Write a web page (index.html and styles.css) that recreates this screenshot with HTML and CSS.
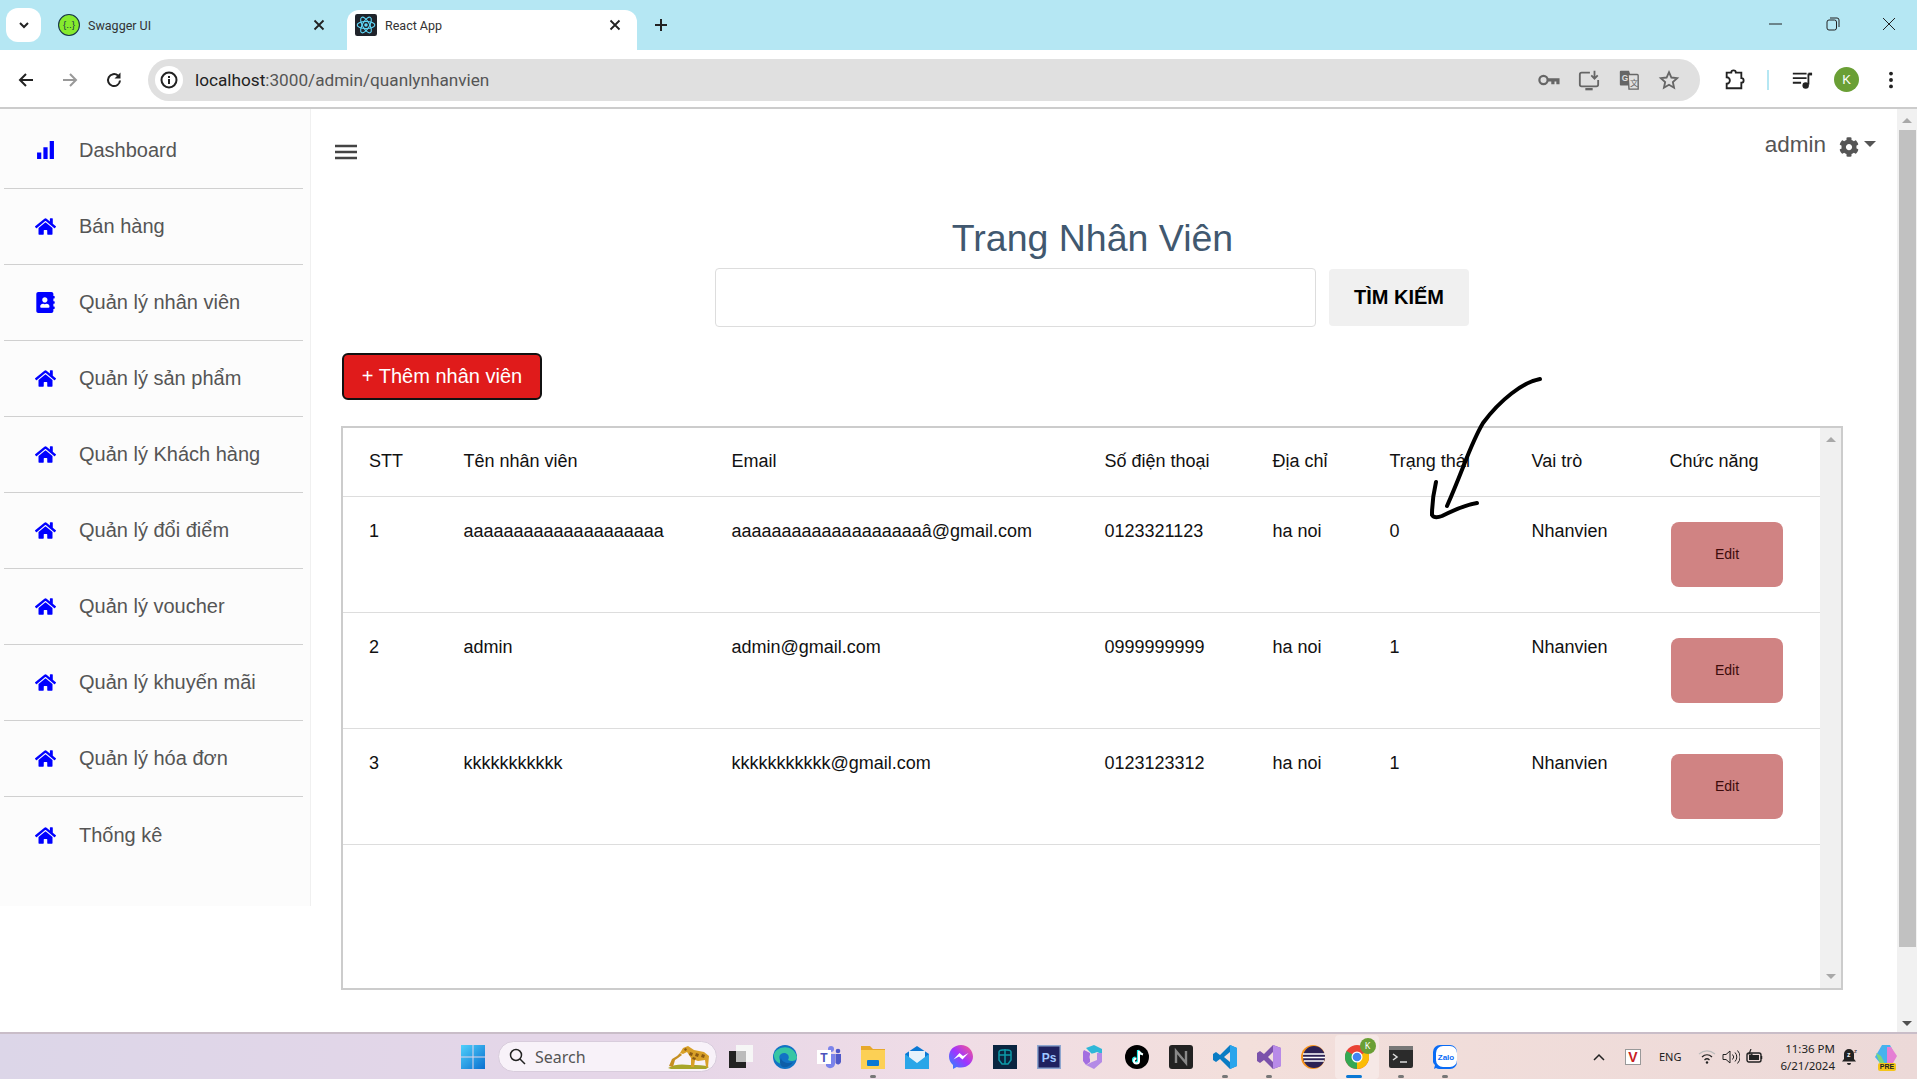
FILE: index.html
```html
<!DOCTYPE html>
<html lang="vi">
<head>
    <meta charset="UTF-8">
    <title>React App</title>
    <link rel="stylesheet" href="styles.css">
</head>
<body>
    <svg class="defs">
        <symbol id="i-home" viewBox="0 0 576 512"><path d="M280.37 148.26L96 300.11V464a16 16 0 0 0 16 16l112.06-.29a16 16 0 0 0 15.92-16V368a16 16 0 0 1 16-16h64a16 16 0 0 1 16 16v95.64a16 16 0 0 0 16 16.05L464 480a16 16 0 0 0 16-16V300L295.67 148.26a12.19 12.19 0 0 0-15.3 0zM571.6 251.47L488 182.56V44.05a12 12 0 0 0-12-12h-56a12 12 0 0 0-12 12v72.61L318.47 43a48 48 0 0 0-61 0L4.34 251.47a12 12 0 0 0-1.6 16.9l25.5 31A12 12 0 0 0 45.15 301l235.22-193.74a12.19 12.19 0 0 1 15.3 0L530.9 301a12 12 0 0 0 16.9-1.6l25.5-31a12 12 0 0 0-1.7-16.93z"/></symbol>
        <symbol id="i-book" viewBox="0 0 448 512"><path d="M436 160c6.6 0 12-5.4 12-12v-40c0-6.6-5.4-12-12-12h-20V48c0-26.5-21.5-48-48-48H48C21.5 0 0 21.5 0 48v416c0 26.5 21.5 48 48 48h320c26.5 0 48-21.5 48-48v-48h20c6.6 0 12-5.4 12-12v-40c0-6.6-5.4-12-12-12h-20v-64h20c6.6 0 12-5.4 12-12v-40c0-6.6-5.4-12-12-12h-20v-64h20zm-228-32c35.3 0 64 28.7 64 64s-28.7 64-64 64-64-28.7-64-64 28.7-64 64-64zm112 236c0 10.6-10 19.2-22.4 19.2H118.4C106 384 96 375.4 96 364.8v-19.2c0-31.8 30.1-57.6 67.2-57.6h5c12.3 5.1 25.7 8 39.8 8s27.6-2.9 39.8-8h5c37.1 0 67.2 25.8 67.2 57.6v19.2z"/></symbol>
        <symbol id="i-bars" viewBox="0 0 18 18"><path d="M1 11h4v6H1zM7 6h4v11H7zM13 0h4v17h-4z"/></symbol>
        <symbol id="i-cog" viewBox="0 0 512 512"><path d="M487.4 315.7l-42.6-24.6c4.3-23.2 4.3-47 0-70.2l42.6-24.6c4.9-2.8 7.1-8.6 5.5-14-11.1-35.6-30-67.8-54.7-94.6-3.8-4.1-10-5.1-14.8-2.3L380.8 110c-17.9-15.4-38.5-27.3-60.8-35.1V25.8c0-5.6-3.9-10.5-9.4-11.7-36.7-8.2-74.3-7.8-109.2 0-5.5 1.2-9.4 6.1-9.4 11.7V75c-22.2 7.9-42.8 19.8-60.8 35.1L88.7 85.5c-4.9-2.8-11-1.9-14.8 2.3-24.7 26.7-43.6 58.9-54.7 94.6-1.7 5.4.6 11.2 5.5 14L67.3 221c-4.3 23.2-4.3 47 0 70.2l-42.6 24.6c-4.9 2.8-7.1 8.6-5.5 14 11.1 35.6 30 67.8 54.7 94.6 3.8 4.1 10 5.1 14.8 2.3l42.6-24.6c17.9 15.4 38.5 27.3 60.8 35.1v49.2c0 5.6 3.9 10.5 9.4 11.7 36.7 8.2 74.3 7.8 109.2 0 5.5-1.2 9.4-6.1 9.4-11.7v-49.2c22.2-7.9 42.8-19.8 60.8-35.1l42.6 24.6c4.9 2.8 11 1.9 14.8-2.3 24.7-26.7 43.6-58.9 54.7-94.6 1.5-5.5-.7-11.3-5.6-14.1zM256 336c-44.1 0-80-35.9-80-80s35.9-80 80-80 80 35.9 80 80-35.9 80-80 80z"/></symbol>
        <symbol id="i-x" viewBox="0 0 12 12"><path d="M1.500 1.500l9 9M10.500 1.500l-9 9" stroke="#222" stroke-width="1.800"/></symbol>
    </svg>

    <!-- browser tabs -->
    <div class="tabstrip">
        <div class="tab-search"><svg width="12" height="12" viewBox="0 0 12 12"><path d="M2 4l4 4 4-4" fill="none" stroke="#222" stroke-width="2"/></svg></div>
        <div class="tab">
            <svg class="favicon" viewBox="0 0 20 20"><circle cx="10" cy="10" r="9.500" fill="#85ea2d" stroke="#173647" stroke-width="1"/><text x="10" y="13" font-size="9" text-anchor="middle" fill="#173647" font-family="Liberation Sans">{..}</text></svg>
            <span class="tab-title">Swagger UI</span>
            <svg class="tab-close"><use href="#i-x"/></svg>
        </div>
        <div class="tab tab-active">
            <svg class="favicon" viewBox="0 0 20 20"><rect width="20" height="20" rx="2" fill="#20232a"/><g fill="none" stroke="#61dafb" stroke-width="1"><ellipse cx="10" cy="10" rx="8" ry="3.200"/><ellipse cx="10" cy="10" rx="8" ry="3.200" transform="rotate(60 10 10)"/><ellipse cx="10" cy="10" rx="8" ry="3.200" transform="rotate(120 10 10)"/></g><circle cx="10" cy="10" r="1.600" fill="#61dafb"/></svg>
            <span class="tab-title">React App</span>
            <svg class="tab-close"><use href="#i-x"/></svg>
        </div>
        <svg class="tab-new" width="16" height="16" viewBox="0 0 16 16"><path d="M8 2v12M2 8h12" stroke="#222" stroke-width="2"/></svg>
        <div class="window-btns">
            <svg width="14" height="14" viewBox="0 0 14 14"><path d="M0 7h13" stroke="#222"/></svg>
            <svg width="14" height="14" viewBox="0 0 14 14"><rect x="1" y="3" width="9.500" height="10" rx="2" fill="none" stroke="#222"/><path d="M4 1h7a2 2 0 0 1 2 2v7" fill="none" stroke="#222"/></svg>
            <svg width="14" height="14" viewBox="0 0 14 14"><path d="M1 1l12 12M13 1L1 13" stroke="#222"/></svg>
        </div>
    </div>

    <!-- address bar -->
    <div class="toolbar">
        <svg class="nav-btn" viewBox="0 0 18 18"><path d="M16 9H3M9 3L3 9l6 6" fill="none" stroke="#222" stroke-width="2"/></svg>
        <svg class="nav-btn" viewBox="0 0 18 18"><path d="M2 9h13M9 3l6 6-6 6" fill="none" stroke="#999" stroke-width="2"/></svg>
        <svg class="nav-btn" viewBox="0 0 18 18"><path d="M15 9.500A6 6 0 1 1 13 4.600" fill="none" stroke="#222" stroke-width="2"/><path d="M15.500 1.500v6h-6z" fill="#222"/></svg>
        <div class="urlbar">
            <span class="url-info"><svg width="18" height="18" viewBox="0 0 18 18"><circle cx="9" cy="9" r="7.500" fill="none" stroke="#222" stroke-width="2"/><path d="M9 8v5M9 5v2" stroke="#222" stroke-width="2"/></svg></span>
            <span class="url-text"><b>localhost</b>:3000/admin/quanlynhanvien</span>
            <div class="url-icons">
                <svg viewBox="0 0 24 24"><circle cx="6" cy="12" r="4.500" fill="none" stroke="#666" stroke-width="2.400"/><path d="M10.500 10h13v6.500h-3.500v-3h-2v3h-3.500v-3h-4z" fill="#666"/></svg>
                <svg viewBox="0 0 24 24"><path d="M13 4H4a2 2 0 0 0-2 2v11a2 2 0 0 0 2 2h16a2 2 0 0 0 2-2v-5" fill="none" stroke="#666" stroke-width="2"/><path d="M8 22h8" stroke="#666" stroke-width="2.500"/><path d="M18 2v8M14.500 7l3.500 3.500 3.500-3.500" fill="none" stroke="#666" stroke-width="2"/></svg>
                <svg viewBox="0 0 24 24"><path d="M3 2h9l1 3v13H3a1 1 0 0 1-1-1V3a1 1 0 0 1 1-1z" fill="#666"/><path d="M11 6h10a1 1 0 0 1 1 1v15H12z" fill="#e0e0e0" stroke="#666" stroke-width="1.500"/><text x="4" y="13" font-size="9" font-weight="bold" fill="#e0e0e0" font-family="Liberation Sans">G</text><text x="13" y="18" font-size="9" fill="#666" font-family="Noto Sans CJK SC">文</text></svg>
                <svg viewBox="0 0 24 24"><path d="M12 3.500l2.600 5.800 6.300.7-4.700 4.200 1.300 6.200-5.500-3.200-5.500 3.200 1.300-6.200L3.100 10l6.300-.7z" fill="none" stroke="#666" stroke-width="2"/></svg>
            </div>
        </div>
        <svg class="tool-btn ext" viewBox="0 0 24 24"><path d="M4 4h5a2.500 2.500 0 0 1 5 0h6v6a2.500 2.500 0 0 1 0 5v6H4v-5a2.500 2.500 0 0 0 0-7z" fill="none" stroke="#222" stroke-width="2"/></svg>
        <span class="tool-sep"></span>
        <svg class="tool-btn media" viewBox="0 0 24 24"><path d="M2 5h15M2 10h15M2 15h9" stroke="#222" stroke-width="2"/><path d="M19 5v12" stroke="#222" stroke-width="2"/><path d="M19 4h4v3h-4z" fill="#222"/><circle cx="16" cy="18" r="3.500" fill="#222"/></svg>
        <span class="avatar">K</span>
        <svg class="tool-btn dots" viewBox="0 0 24 24"><circle cx="12" cy="5" r="2.100" fill="#222"/><circle cx="12" cy="12" r="2.100" fill="#222"/><circle cx="12" cy="19" r="2.100" fill="#222"/></svg>
    </div>

    <!-- page -->
    <div class="viewport">
        <div class="page">
            <aside class="sidebar">
                <a class="side-item"><svg class="side-icon"><use href="#i-bars"/></svg>Dashboard</a>
                <a class="side-item"><svg class="side-icon"><use href="#i-home"/></svg>Bán hàng</a>
                <a class="side-item"><svg class="side-icon side-book"><use href="#i-book"/></svg>Quản lý nhân viên</a>
                <a class="side-item"><svg class="side-icon"><use href="#i-home"/></svg>Quản lý sản phẩm</a>
                <a class="side-item"><svg class="side-icon"><use href="#i-home"/></svg>Quản lý Khách hàng</a>
                <a class="side-item"><svg class="side-icon"><use href="#i-home"/></svg>Quản lý đổi điểm</a>
                <a class="side-item"><svg class="side-icon"><use href="#i-home"/></svg>Quản lý voucher</a>
                <a class="side-item"><svg class="side-icon"><use href="#i-home"/></svg>Quản lý khuyến mãi</a>
                <a class="side-item"><svg class="side-icon"><use href="#i-home"/></svg>Quản lý hóa đơn</a>
                <a class="side-item"><svg class="side-icon"><use href="#i-home"/></svg>Thống kê</a>
            </aside>

            <main class="content">
                <div class="topbar">
                    <svg class="burger" viewBox="0 0 22 16"><path d="M0 2h22M0 8h22M0 14h22" stroke="#444" stroke-width="2.400"/></svg>
                    <div class="user-menu">
                        <span>admin</span>
                        <svg class="cog"><use href="#i-cog"/></svg>
                        <span class="caret"></span>
                    </div>
                </div>

                <h1 class="page-title">Trang Nhân Viên</h1>
                <div class="search-row">
                    <input class="search-input" type="text">
                    <button class="search-btn">TÌM KIẾM</button>
                </div>

                <button class="add-btn">+ Thêm nhân viên</button>

                <div class="table-box">
                    <table class="staff-table">
                        <colgroup>
                            <col class="c-stt"><col class="c-name"><col class="c-email"><col class="c-phone"><col class="c-addr"><col class="c-status"><col class="c-role"><col>
                        </colgroup>
                        <thead>
                            <tr>
                                <th>STT</th><th>Tên nhân viên</th><th>Email</th><th>Số điện thoại</th><th>Địa chỉ</th><th>Trạng thái</th><th>Vai trò</th><th>Chức năng</th>
                            </tr>
                        </thead>
                        <tbody>
                            <tr>
                                <td>1</td><td>aaaaaaaaaaaaaaaaaaaa</td><td>aaaaaaaaaaaaaaaaaaaâ@gmail.com</td><td>0123321123</td><td>ha noi</td><td>0</td><td>Nhanvien</td>
                                <td><button class="edit-btn">Edit</button></td>
                            </tr>
                            <tr>
                                <td>2</td><td>admin</td><td>admin@gmail.com</td><td>0999999999</td><td>ha noi</td><td>1</td><td>Nhanvien</td>
                                <td><button class="edit-btn">Edit</button></td>
                            </tr>
                            <tr>
                                <td>3</td><td>kkkkkkkkkkk</td><td>kkkkkkkkkkk@gmail.com</td><td>0123123312</td><td>ha noi</td><td>1</td><td>Nhanvien</td>
                                <td><button class="edit-btn">Edit</button></td>
                            </tr>
                        </tbody>
                    </table>
                    <div class="inner-scroll">
                        <span class="arrow-up"></span>
                        <span class="arrow-down"></span>
                    </div>
                </div>
            </main>
        </div>
        <div class="page-scroll">
            <span class="arrow-up"></span>
            <span class="scroll-thumb"></span>
            <span class="arrow-down dark"></span>
        </div>

        <!-- hand drawn arrow on top of the screenshot -->
        <svg class="scribble" viewBox="1425 375 120 145">
            <path d="M1540 379C1523 382 1500 400 1483 423C1470 445 1465 465 1447 506" fill="none" stroke="#000" stroke-width="4" stroke-linecap="round"/>
            <path d="M1436 482C1433 495 1432 505 1432 515C1434 518 1437 518 1442 516C1452 511 1465 505 1477 503" fill="none" stroke="#000" stroke-width="4" stroke-linecap="round"/>
        </svg>
    </div>

    <!-- windows taskbar -->
    <footer class="taskbar">
        <div class="task-left">
            <svg class="task-icon" viewBox="0 0 24 24"><defs><linearGradient id="win" x1="0" y1="0" x2="1" y2="1"><stop offset="0" stop-color="#4fd0fb"/><stop offset="1" stop-color="#0a6fd0"/></linearGradient></defs><path d="M0 0h11.500v11.500H0zM12.500 0H24v11.500H12.500zM0 12.500h11.500V24H0zM12.500 12.500H24V24H12.500z" fill="url(#win)"/></svg>
            <div class="task-search">
                <svg width="17" height="17" viewBox="0 0 17 17"><circle cx="7" cy="7" r="5.500" fill="none" stroke="#222" stroke-width="1.500"/><path d="M11 11l5 5" stroke="#222" stroke-width="1.500"/></svg>
                <span>Search</span>
                <svg class="giraffe" viewBox="0 0 42 24"><path d="M0 23C6 19 14 19 22 20C30 20 36 20 41 22L38 24H3z" fill="#a8a52a"/><path d="M1 21L4 14L9 11L12 8L14 10L10 13L7 15L5 22z" fill="#c58f22"/><path d="M12 8L15 3L20 1L26 5L36 7L41 11L40 22H38L37 15L30 16L27 15L26 22H23L23 13L19 7L15 9z" fill="#d8a028"/><path d="M22 7l3 1-1 3-3-1zM28 8l3 1-1 3-3-1zM34 9l3 1-1 3-3-1zM25 12l3 1-1 2-3-1zM17 3l2 1-1 2-2-1z" fill="#8a5a14"/></svg>
            </div>
            <svg class="task-icon" viewBox="0 0 24 24"><rect x="7" y="0" width="17" height="17" fill="#f6f6f6"/><rect y="6" width="17" height="17" fill="#222"/><rect x="7" y="6" width="10" height="11" fill="#bbb"/></svg>
            <svg class="task-icon" viewBox="0 0 24 24"><circle cx="12" cy="12" r="12" fill="#1173c5"/><path d="M1 9C4 1 20-2 24 12C24 16 18 17 15 15C18 10 12 6 8 9C5 11 6 17 11 19C6 20 0 15 1 9z" fill="#37c6a4"/><path d="M8 13c1 5 8 6 12 4-2 4-7 6-10 5C7 21 6 16 8 13z" fill="#0d5ea8"/></svg>
            <svg class="task-icon" viewBox="0 0 24 24"><circle cx="14" cy="4" r="3" fill="#7b83eb"/><circle cx="21" cy="6" r="2.300" fill="#5059c9"/><path d="M9 9h9v10a5 5 0 0 1-9 2z" fill="#7b83eb"/><path d="M18.500 9H24v8a3 3 0 0 1-5.500 1z" fill="#5059c9"/><rect y="5" width="14" height="14" fill="#fff"/><text x="7" y="16.500" font-size="12" font-weight="bold" text-anchor="middle" fill="#4b53bc" font-family="Liberation Sans">T</text></svg>
            <span class="task-slot open"><svg class="task-icon" viewBox="0 0 24 24"><path d="M0 1h9l3 3h12v20H0z" fill="#e8a92b"/><path d="M0 5h24v19H0z" fill="#fcd055"/><rect x="6" y="15" width="12" height="6" rx="1" fill="#0a78d4"/></svg></span>
            <svg class="task-icon" viewBox="0 0 24 24"><path d="M0 9L12 1l12 8v15H0z" fill="#0a78d4"/><path d="M4 6h16v9l-8 5-8-5z" fill="#e4f2fb"/><path d="M0 9l12 9 12-9v15H0z" fill="#2aa6e8"/></svg>
            <svg class="task-icon" viewBox="0 0 24 24"><defs><linearGradient id="msg" x1="0" y1="1" x2="1" y2="0"><stop offset="0" stop-color="#1f8fff"/><stop offset=".5" stop-color="#a033ff"/><stop offset="1" stop-color="#ff5c87"/></linearGradient></defs><path d="M12 0C5 0 0 5 0 11.500c0 3.500 1.500 6.500 4 8.500v4l3.700-2c1.400.4 2.800.6 4.300.6 7 0 12-5 12-11S19 0 12 0z" fill="url(#msg)"/><path d="M4.500 14.500l6-6.500 3.500 3 5.500-3-6 6.500-3.500-3z" fill="#fff"/></svg>
            <svg class="task-icon" viewBox="0 0 24 24"><rect width="24" height="24" fill="#0a2540"/><path d="M6 7c0-3 12-3 12 0v8l-3 4h-6l-3-4zM12 4v15M6 10h12" fill="none" stroke="#0d9aa8" stroke-width="1.500"/></svg>
            <svg class="task-icon" viewBox="0 0 24 24"><rect width="24" height="24" fill="#8fa6cf"/><rect x="1.500" y="1.500" width="21" height="21" fill="#1f2260"/><text x="12" y="17" font-size="12" font-weight="bold" text-anchor="middle" fill="#9fc7ff" font-family="Liberation Sans">Ps</text></svg>
            <svg class="task-icon" viewBox="0 0 24 24"><path d="M5 3l8-3 8 4v5l-5-2-5 2z" fill="#2fb7d8"/><path d="M3 5l6 3v9l-4 3-3-4V7z" fill="#a36ee0"/><path d="M21 8v9l-8 7-8-4 6-3 5-2V8z" fill="#b48ae6"/><circle cx="12" cy="12" r="3.500" fill="#f2dfdc"/></svg>
            <svg class="task-icon" viewBox="0 0 24 24"><circle cx="12" cy="12" r="12" fill="#000"/><path d="M13 5v10a2.500 2.500 0 1 1-2.500-2.500M13 5c.5 2.500 2 3.500 4 4" fill="none" stroke="#25f4ee" stroke-width="2.200"/><path d="M14 6v10a2.500 2.500 0 1 1-2.500-2.500M14 6c.5 2 2 3 4 3.500" fill="none" stroke="#fff" stroke-width="2"/></svg>
            <svg class="task-icon" viewBox="0 0 24 24"><rect width="24" height="24" rx="3" fill="#222"/><path d="M7 18V6l10 12V6" fill="none" stroke="#888" stroke-width="2.400"/></svg>
            <span class="task-slot open"><svg class="task-icon" viewBox="0 0 24 24"><path d="M17 0l7 3v18l-7 3L7 14l-4 3-3-2v-6l3-2 4 3z" fill="#0a7cc4"/><path d="M17 0l7 3v18l-7 3z" fill="#2aa5ec"/><path d="M17 7v10l-6-5z" fill="#f2dfdc"/></svg></span>
            <span class="task-slot open"><svg class="task-icon" viewBox="0 0 24 24"><path d="M16 0l8 3v18l-8 3-9-9-4 3-3-2V8l3-2 4 3z" fill="#7b52ab"/><path d="M16 0l8 3v18l-8 3z" fill="#b88ae8"/><path d="M16 7v10l-5-5z" fill="#f2dfdc"/></svg></span>
            <svg class="task-icon" viewBox="0 0 24 24"><circle cx="12" cy="12" r="12" fill="#f7941e"/><circle cx="13" cy="12" r="11" fill="#2c2255"/><path d="M2 9h22M2 12.500h22M3 16h20" stroke="#fff" stroke-width="1.300"/></svg>
            <span class="task-slot active">
                <svg class="task-icon" viewBox="0 0 24 24"><circle cx="12" cy="12" r="12" fill="#ea4335"/><path d="M12 12L1.600 6A12 12 0 0 0 12 24z" fill="#34a853"/><path d="M12 12l10.400-6A12 12 0 0 1 12 24z" fill="#fbbc05"/><circle cx="12" cy="12" r="5.500" fill="#fff"/><circle cx="12" cy="12" r="4.300" fill="#4285f4"/></svg>
                <span class="chrome-badge">K</span>
            </span>
            <span class="task-slot open"><svg class="task-icon" viewBox="0 0 24 24"><rect y="1" width="24" height="22" rx="2" fill="#2b2b2b"/><rect y="1" width="24" height="4" fill="#777"/><path d="M4 9l4 3-4 3" fill="none" stroke="#ddd" stroke-width="1.500"/><path d="M11 17h7" stroke="#ddd" stroke-width="1.500"/></svg></span>
            <span class="task-slot open"><svg class="task-icon" viewBox="0 0 24 24"><path d="M7 0h10a7 7 0 0 1 7 7v10a7 7 0 0 1-7 7H7a7 7 0 0 1-4-1L1 24l1-4a7 7 0 0 1-2-3V7a7 7 0 0 1 7-7z" fill="#0a6cf5"/><rect x="3" y="1" width="21" height="21" rx="7" fill="#fff"/><text x="13" y="15" font-size="8" font-weight="bold" text-anchor="middle" fill="#0a6cf5" font-family="Liberation Sans">Zalo</text></svg></span>
        </div>
        <div class="tray">
            <svg width="14" height="14" viewBox="0 0 14 14"><path d="M2 10l5-5 5 5" fill="none" stroke="#222" stroke-width="1.500"/></svg>
            <span class="tray-v">V</span>
            <span class="tray-lang">ENG</span>
            <svg width="18" height="16" viewBox="0 0 18 16"><path d="M1 5c5-4 11-4 16 0" fill="none" stroke="#bbb" stroke-width="1.200"/><path d="M4 8c3-3 7-3 10 0M6.500 11c1.500-1.500 3.500-1.500 5 0" fill="none" stroke="#222" stroke-width="1.200"/><circle cx="9" cy="13.500" r="1.200" fill="#222"/></svg>
            <svg width="18" height="16" viewBox="0 0 18 16"><path d="M1 5.500h3L8 2v12l-4-3.500H1z" fill="none" stroke="#222"/><path d="M10.500 5.500a3.500 3.500 0 0 1 0 5M13 3.500a6.500 6.500 0 0 1 0 9M15.500 1.500a9.500 9.500 0 0 1 0 13" fill="none" stroke="#222"/></svg>
            <svg width="18" height="16" viewBox="0 0 18 16"><rect x="1" y="4" width="14" height="9" rx="2" fill="none" stroke="#222" stroke-width="1.400"/><rect x="3" y="6" width="10" height="5" fill="#222"/><path d="M15.500 7v3" stroke="#222" stroke-width="1.500"/><path d="M5 0L3 5h3l-1 4" fill="none" stroke="#222" stroke-width="1.200"/></svg>
            <div class="tray-clock"><span>11:36 PM</span><span>6/21/2024</span></div>
            <svg width="16" height="18" viewBox="0 0 16 18"><path d="M7 1a5 5 0 0 1 5 5v5l2 2.500H0L2 11V6a5 5 0 0 1 5-5z" fill="#222"/><path d="M5 15h4a2 2 0 0 1-4 0z" fill="#222"/><text x="5" y="9" font-size="7" font-weight="bold" fill="#eee" font-family="Liberation Sans">z</text><text x="12" y="5" font-size="6" fill="#222" font-family="Liberation Sans">z</text></svg>
            <span class="copilot">
                <svg width="24" height="24" viewBox="0 0 24 24"><path d="M8 1h8l3 6-6 12H6L1 13z" fill="#46b2ee"/><path d="M13 3h4l6 9-4 7h-6z" fill="#e57fd4"/><path d="M2 9l5 3 4 8H6z" fill="#7cd67c"/></svg>
                <span class="pre-tag">PRE</span>
            </span>
        </div>
    </footer>
</body>
</html>
```

FILE: styles.css
```css
* {
    box-sizing: border-box;
}

html, body {
    height: 100%;
}

body {
    margin: 0;
    height: 1079px;
    overflow: hidden;
    display: flex;
    flex-direction: column;
    font-family: "Liberation Sans", Arial, sans-serif;
    background: #fff;
}

.defs {
    display: none;
}

/* browser chrome */
.tabstrip {
    height: 50px;
    flex: none;
    display: flex;
    background: #b5e7f3;
    padding-left: 6px;
    font-family: Roboto, sans-serif;
}

.tab-search {
    width: 35px;
    height: 34px;
    margin-top: 8px;
    background: #fff;
    border-radius: 12px;
    display: flex;
    align-items: center;
    justify-content: center;
}

.tab {
    width: 290px;
    height: 40px;
    margin-top: 10px;
    display: flex;
    align-items: center;
    padding: 0 6px 10px 17px;
    font-size: 12.5px;
    color: #333;
    border-radius: 12px 12px 0 0;
}

.tab-active {
    background: #fff;
    margin-left: 16px;
    padding: 0 16px 10px 8px;
}

.favicon {
    width: 22px;
    height: 22px;
    margin-right: 8px;
}

.tab-title {
    flex: 1;
}

.tab-close {
    width: 12px;
    height: 12px;
}

.tab-new {
    margin: 17px 0 0 16px;
}

.window-btns {
    margin-left: auto;
    width: 148px;
    padding-right: 21px;
    display: flex;
    justify-content: space-between;
    align-items: center;
    height: 48px;
}

.toolbar {
    height: 59px;
    flex: none;
    display: flex;
    align-items: center;
    background: #fff;
    border-bottom: 2px solid #ccc;
    border-radius: 12px 12px 0 0;
    padding: 2px 0 0 17px;
}

.nav-btn {
    width: 18px;
    height: 18px;
    margin-right: 26px;
}

.urlbar {
    width: 1552px;
    height: 42px;
    margin-left: -1px;
    background: #e0e0e0;
    border-radius: 21px;
    display: flex;
    align-items: center;
    padding: 0 20px 0 7px;
}

.url-info {
    width: 28px;
    height: 28px;
    background: #fff;
    border-radius: 50%;
    display: flex;
    align-items: center;
    justify-content: center;
}

.url-text {
    margin-left: 12px;
    font-size: 17.2px;
    color: #555;
    font-family: Roboto, sans-serif;
}

.url-text b {
    font-weight: normal;
    color: #222;
}

.url-icons {
    margin-left: auto;
    display: flex;
    gap: 18px;
}

.url-icons svg {
    width: 22px;
    height: 22px;
}

.tool-btn {
    width: 22px;
    height: 22px;
}

.ext {
    margin-left: 23px;
}

.tool-sep {
    width: 2px;
    height: 20px;
    background: #b5e7f3;
    margin: 0 22px;
}

.avatar {
    width: 25px;
    height: 25px;
    margin: 0 21px 0 21px;
    border-radius: 50%;
    background: #6a9f35;
    color: #fff;
    font-size: 13px;
    display: flex;
    align-items: center;
    justify-content: center;
}

/* page */
.viewport {
    flex: 1;
    display: flex;
    position: relative;
    min-height: 0;
}

.page {
    flex: 1;
    display: flex;
    align-items: flex-start;
    min-width: 0;
}

.sidebar {
    width: 311px;
    height: 797px;
    flex: none;
    background: #fcfcfc;
    border-right: 1px solid #f0f0f0;
    padding: 4px 7px 0 4px;
}

.side-item {
    height: 76px;
    display: flex;
    align-items: center;
    padding-left: 31px;
    font-size: 20px;
    color: #555;
    border-bottom: 1px solid #d0d0d0;
}

.side-item:last-child {
    border-bottom: 0;
}

.side-icon {
    width: 21px;
    height: 19px;
    margin-right: 23px;
    fill: #0000ff;
}

.side-book {
    height: 21px;
}

.content {
    flex: 1;
    min-width: 0;
    padding: 0 0 0 30px;
}

.topbar {
    height: 104px;
    display: flex;
    align-items: flex-start;
    justify-content: space-between;
    padding: 34px 21px 0 0;
}

.burger {
    width: 22px;
    height: 16px;
    margin: 1px 0 0 -6px;
}

.user-menu {
    display: flex;
    align-items: center;
    color: #555;
    font-size: 22.5px;
    margin-top: -11px;
}

.cog {
    width: 20px;
    height: 20px;
    fill: #555;
    margin: 3px 5px 0 13px;
}

.caret {
    width: 0;
    height: 0;
    border: 6px solid transparent;
    border-top-color: #555;
    border-bottom: 0;
    margin-top: -3px;
}

.page-title {
    margin: 0;
    text-align: center;
    font-size: 37.5px;
    font-weight: normal;
    color: #41586f;
    line-height: 50px;
    padding-right: 53px;
}

.search-row {
    display: flex;
    gap: 13px;
    padding-left: 374px;
    margin-top: 5px;
    align-items: center;
}

.search-input {
    width: 601px;
    height: 59px;
    border: 1px solid #ddd;
    border-radius: 4px;
    background: #fff;
}

.search-btn {
    width: 140px;
    height: 57px;
    border: 0;
    border-radius: 4px;
    background: #f0f0f0;
    color: #000;
    font: bold 20px "Liberation Sans", Arial, sans-serif;
}

.add-btn {
    display: block;
    margin: 26px 0 0 1px;
    width: 200px;
    height: 47px;
    background: #e01b1b;
    color: #fff;
    border: 2px solid #111;
    border-radius: 6px;
    font: 20px "Liberation Sans", Arial, sans-serif;
}

.table-box {
    width: 1502px;
    height: 564px;
    margin-top: 26px;
    border: 2px solid #ccc;
    display: flex;
    justify-content: space-between;
}

.staff-table {
    width: 1479px;
    border-collapse: collapse;
    table-layout: fixed;
    align-self: flex-start;
    font-size: 18px;
    color: #111;
}

.c-stt { width: 93px; }
.c-name { width: 268px; }
.c-email { width: 373px; }
.c-phone { width: 168px; }
.c-addr { width: 117px; }
.c-status { width: 142px; }
.c-role { width: 138px; }

.staff-table th {
    height: 68px;
    padding: 0 0 0 27.5px;
    text-align: left;
    font-weight: normal;
    border-bottom: 1px solid #ddd;
}

.staff-table td {
    height: 116px;
    padding: 23px 0 0 27.5px;
    vertical-align: top;
    border-bottom: 1px solid #ddd;
    line-height: 22px;
}

.staff-table th:first-child,
.staff-table td:first-child {
    padding-left: 26px;
}

.edit-btn {
    display: block;
    width: 112px;
    height: 65px;
    margin: 25px 0 0 1.5px;
    border: 0;
    border-radius: 8px;
    background: #d08383;
    color: #3d0b0b;
    font: 14px "Liberation Sans", Arial, sans-serif;
}

.staff-table td:last-child {
    padding-top: 0;
}

.inner-scroll {
    width: 21px;
    background: #f0f0f0;
    display: flex;
    flex-direction: column;
    justify-content: space-between;
    align-items: center;
    padding: 9px 0 9px;
}

.arrow-up, .arrow-down {
    width: 0;
    height: 0;
    border-left: 5px solid transparent;
    border-right: 5px solid transparent;
}

.arrow-up {
    border-bottom: 5px solid #a8a8a8;
}

.arrow-down {
    border-top: 5px solid #a8a8a8;
}

.arrow-down.dark {
    border-top-color: #505050;
}

.page-scroll {
    width: 20px;
    flex: none;
    background: #f1f1f1;
    display: flex;
    flex-direction: column;
    align-items: center;
    padding: 9px 0 6px;
}

.scroll-thumb {
    width: 17px;
    height: 817px;
    margin-top: 7px;
    background: #c1c1c1;
    margin-bottom: auto;
}

.scribble {
    position: absolute;
    left: 1425px;
    top: 266px;
    width: 120px;
    height: 145px;
}

/* taskbar */
.taskbar {
    height: 47px;
    flex: none;
    display: flex;
    align-items: center;
    padding-left: 461px;
    background: linear-gradient(90deg, #dcd6e8 0%, #e6d6e8 35%, #f0dde6 50%, #f3dfdb 65%, #ecd9d8 100%);
    border-top: 2px solid #c9bdc8;
    font-family: "Noto Sans", sans-serif;
}

.task-left {
    display: flex;
    align-items: center;
}

.task-icon {
    width: 24px;
    height: 24px;
    margin: 0 10px;
    flex: none;
    display: block;
}

.task-left > .task-icon:first-child {
    margin: 0 13px 0 0;
}

.task-search {
    width: 219px;
    height: 31px;
    margin-right: 1.5px;
    background: #f8f2f9;
    border: 1px solid #d8ccdc;
    border-radius: 16px;
    display: flex;
    align-items: center;
    padding-left: 10px;
    font-size: 16px;
    color: #555;
    position: relative;
}

.task-search span {
    margin-left: 9px;
}

.giraffe {
    margin-left: auto;
    width: 42px;
    height: 24px;
    margin-right: 6px;
}

.task-slot {
    position: relative;
    display: block;
    width: 44px;
    height: 44px;
    padding-top: 10px;
}

.task-slot.open::after {
    content: "";
    position: absolute;
    left: 19px;
    bottom: 1px;
    width: 6px;
    height: 3px;
    border-radius: 2px;
    background: #777;
}

.task-slot.active {
    background: #f6e8e6;
    border-radius: 4px;
}

.task-slot.active::after {
    content: "";
    position: absolute;
    left: 11px;
    bottom: 1px;
    width: 16px;
    height: 3px;
    border-radius: 2px;
    background: #0a78d4;
}

.chrome-badge {
    position: absolute;
    top: 3px;
    right: 3px;
    width: 16px;
    height: 16px;
    border-radius: 50%;
    background: #6a9f35;
    color: #fff;
    font-size: 9px;
    display: flex;
    align-items: center;
    justify-content: center;
}

.tray {
    margin-left: auto;
    display: flex;
    align-items: center;
    gap: 6px;
    padding-right: 19px;
    font-size: 12px;
    color: #222;
}

.tray-v {
    width: 16px;
    height: 16px;
    margin: 0 12px 0 13px;
    background: #fff;
    border: 1px solid #999;
    color: #c8201f;
    font: bold 14px/14px "Liberation Sans", Arial, sans-serif;
    text-align: center;
}

.tray-lang {
    font-size: 11px;
    margin-right: 11px;
}

.tray-clock {
    display: flex;
    flex-direction: column;
    align-items: flex-end;
    line-height: 17px;
    font-size: 11.5px;
    margin: 0 1px 0 10px;
}

.copilot {
    position: relative;
    display: block;
    width: 24px;
    height: 26px;
    margin-left: 10px;
}

.pre-tag {
    position: absolute;
    left: 4px;
    bottom: -1px;
    width: 18px;
    background: #f5c518;
    border-radius: 2px;
    font: bold 7px/8px "Liberation Sans", Arial, sans-serif;
    text-align: center;
}
```
